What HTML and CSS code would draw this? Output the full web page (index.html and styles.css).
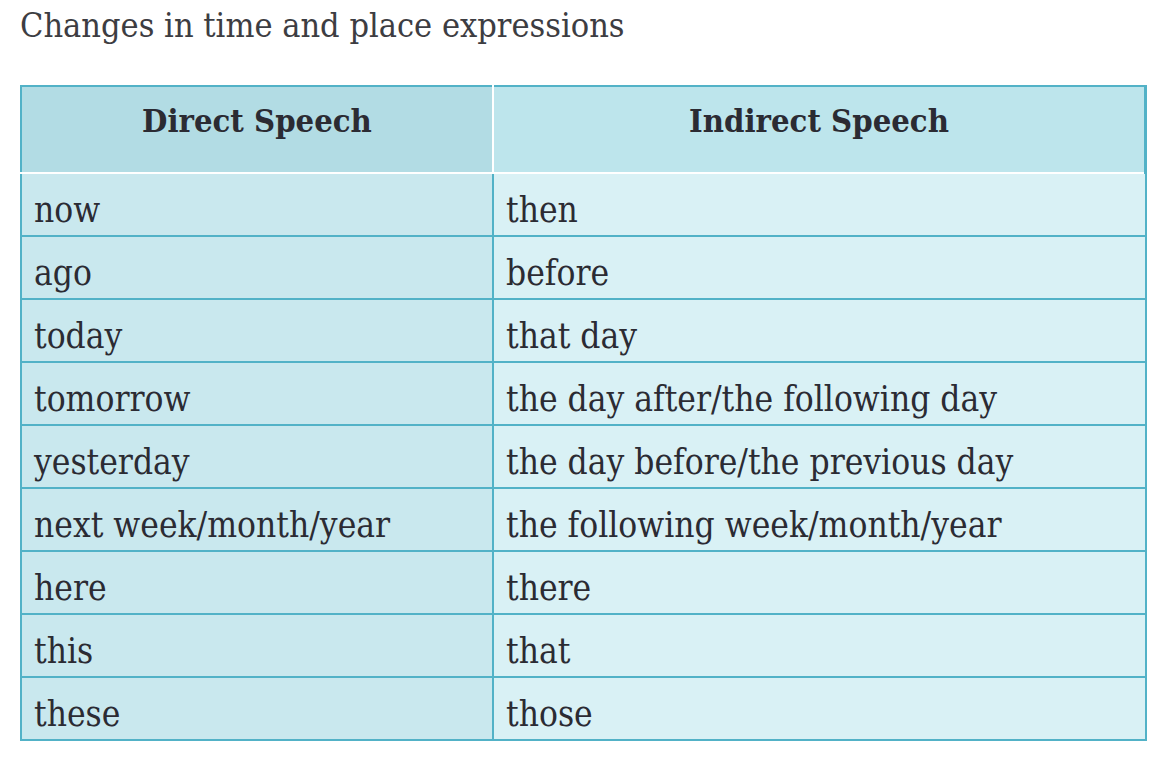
FILE: index.html
```html
<!DOCTYPE html>
<html lang="en">
<head>
<meta charset="utf-8">
<title>Changes in time and place expressions</title>
<link rel="stylesheet" href="styles.css">
</head>
<body>
<main class="page">
  <h1 class="title">Changes in time and place expressions</h1>
  <table class="speech">
    <thead>
      <tr>
        <th class="h-direct">Direct Speech</th>
        <th class="h-indirect">Indirect Speech</th>
      </tr>
    </thead>
    <tbody>
      <tr><td class="c-direct">now</td><td class="c-indirect">then</td></tr>
      <tr><td class="c-direct">ago</td><td class="c-indirect">before</td></tr>
      <tr><td class="c-direct">today</td><td class="c-indirect">that day</td></tr>
      <tr><td class="c-direct">tomorrow</td><td class="c-indirect">the day after/the following day</td></tr>
      <tr><td class="c-direct">yesterday</td><td class="c-indirect">the day before/the previous day</td></tr>
      <tr><td class="c-direct">next week/month/year</td><td class="c-indirect">the following week/month/year</td></tr>
      <tr><td class="c-direct">here</td><td class="c-indirect">there</td></tr>
      <tr><td class="c-direct">this</td><td class="c-indirect">that</td></tr>
      <tr><td class="c-direct">these</td><td class="c-indirect">those</td></tr>
    </tbody>
  </table>
</main>
</body>
</html>
```
FILE: styles.css
```css
html, body {
  margin: 0;
  padding: 0;
  background: #ffffff;
}

.page {
  padding: 0 0 0 20px;
  font-family: "DejaVu Serif Condensed", "DejaVu Serif", "Liberation Serif", serif;
  color: #2b2b33;
}

.title {
  margin: 0;
  padding-top: 5px;
  font-size: 34px;
  font-weight: normal;
  line-height: 40px;
  color: #3d3d42;
}

.speech {
  margin-top: 40px;
  width: 1127px;
  border-collapse: collapse;
  table-layout: fixed;
  font-size: 35px;
  line-height: 40px;
}

.speech th {
  height: 67px;
  font-size: 32.5px;
  font-weight: bold;
  text-align: center;
  vertical-align: middle;
  padding: 0 0 18px 0;
  border-top: 2px solid #52b2c7;
  border-bottom: 2px solid #ffffff;
  color: #2b2b33;
}

.h-direct {
  width: 470px;
  background: #b2dce4;
  border-left: 2px solid #52b2c7;
  border-right: 2px solid #ffffff;
}

.h-indirect {
  background: #bde5ec;
  border-right: 3px solid #52b2c7;
}

.speech td {
  height: 51px;
  padding: 10px 8px 0 12px;
  border: 2px solid #52b2c7;
  text-align: left;
  vertical-align: middle;
  white-space: nowrap;
}

.c-direct {
  background: #c9e8ee;
}

.c-indirect {
  background: #d9f1f5;
}
```
